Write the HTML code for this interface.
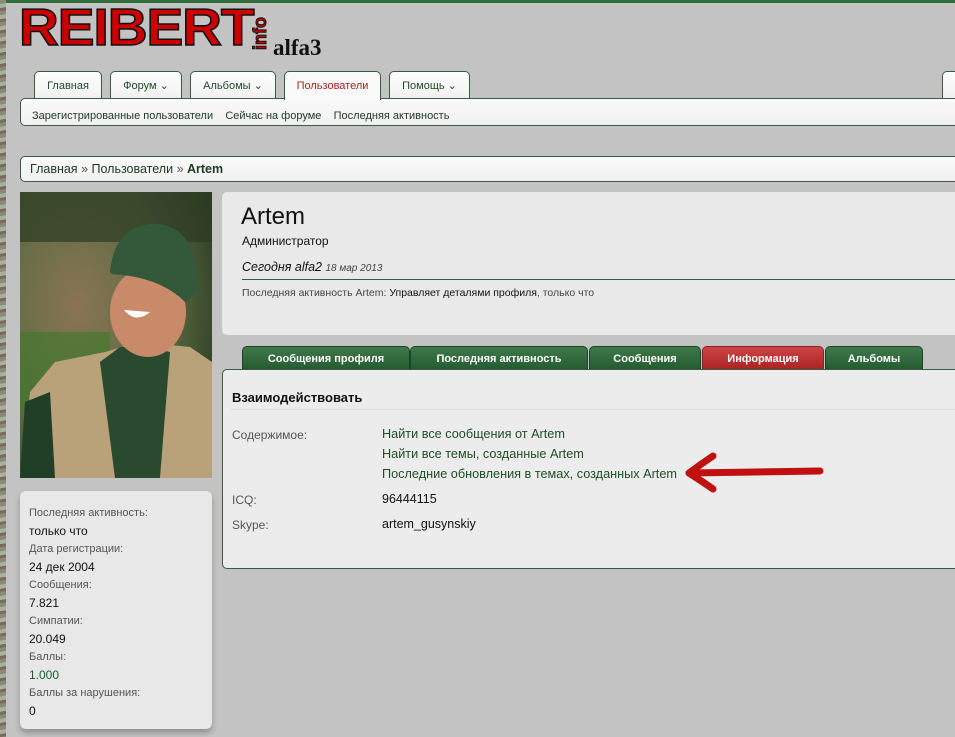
<!DOCTYPE html>
<html><head><meta charset="utf-8"><style>
*{margin:0;padding:0;box-sizing:border-box}
body{width:955px;height:737px;overflow:hidden;background:#c3c3c3;font-family:"Liberation Sans",sans-serif;position:relative;color:#222}
.a{position:absolute}
.tab{position:absolute;top:71px;height:28px;background:linear-gradient(#fff,#f0f0f0);border:1px solid #3a5a48;border-bottom:none;border-radius:5px 5px 0 0;font-size:11px;color:#1e4a2a;text-align:center;line-height:28px}
.sub{font-size:11px;color:#1e3a22}
.bar{position:absolute;left:20px;right:-5px;background:linear-gradient(#fafafa,#f0f0f0);border:1px solid #3a5a48;border-radius:5px}
.pt{position:absolute;top:346px;height:24px;background:linear-gradient(#3f7a4a,#245a30);border:1px solid #1d4226;border-bottom:none;border-radius:5px 5px 0 0;color:#fff;font-weight:bold;font-size:11px;text-align:center;line-height:24px}
.lab{font-size:11px;color:#555}
.val{font-size:12px;color:#111}
.lk{font-size:12.7px;color:#1e4f25}
</style></head><body>
<div class="a" style="left:0;top:0;width:955px;height:3px;background:#2f6d3a"></div>
<div class="a" style="left:0;top:0;width:6px;height:737px;background:repeating-linear-gradient(170deg,#8a8a78 0 4px,#a8b0a0 4px 8px,#7a6a5a 8px 11px)"></div>
<div class="a" style="left:19px;top:0;font-weight:bold;font-size:52px;color:#c00;line-height:56px;-webkit-text-stroke:1.5px #111;transform:scaleX(1.06);transform-origin:left;letter-spacing:-1px">REIBERT</div>
<div class="a" style="left:251px;top:50px;font-weight:bold;font-size:18px;color:#c00;-webkit-text-stroke:1px #111;transform:rotate(-90deg);transform-origin:left top;line-height:18px">info</div>
<div class="a" style="left:273px;top:35px;font-family:'Liberation Serif',serif;font-weight:bold;font-size:23px;color:#111">alfa3</div>

<div class="tab" style="left:34px;width:68px">Главная</div>
<div class="tab" style="left:110px;width:72px">Форум ⌄</div>
<div class="tab" style="left:190px;width:86px">Альбомы ⌄</div>
<div class="tab" style="left:284px;width:97px;color:#b02020;height:29px;background:#fafafa;z-index:2">Пользователи</div>
<div class="tab" style="left:389px;width:81px">Помощь ⌄</div>
<div class="tab" style="left:942px;width:20px"></div>
<div class="bar" style="top:98px;height:28px;padding:7px 11px"><span class="sub">Зарегистрированные пользователи &nbsp;&nbsp; Сейчас на форуме &nbsp;&nbsp; Последняя активность</span></div>
<div class="bar" style="top:156px;height:26px;padding:5px 9px;font-size:12.5px;color:#1e3a22">Главная <span style="color:#555">»</span> Пользователи <span style="color:#555">»</span> <b>Artem</b></div>

<svg class="a" style="left:20px;top:192px" width="192" height="286" viewBox="0 0 192 286">
<defs><radialGradient id="bg" cx=".3" cy=".4" r=".8"><stop offset="0" stop-color="#8a7456"/><stop offset=".6" stop-color="#5a6a40"/><stop offset="1" stop-color="#2a3a22"/></radialGradient></defs>
<rect width="192" height="286" fill="url(#bg)"/>
<rect width="192" height="50" fill="#2c3a24" opacity=".7"/>
<rect y="140" width="90" height="80" fill="#3d7a2a" opacity=".6"/>
<path d="M0 286 L10 200 L35 170 L85 160 L120 150 L170 155 L192 170 L192 286Z" fill="#b9a27a"/>
<path d="M80 170 L100 155 L130 155 L150 160 L140 286 L95 286Z" fill="#2a4a30"/>
<path d="M0 286 L5 210 L30 200 L35 286Z" fill="#213f27"/>
<ellipse cx="128" cy="120" rx="38" ry="45" fill="#c98a6a"/>
<path d="M90 80 Q95 30 140 32 Q180 40 178 100 L165 110 Q140 85 92 82Z" fill="#34583a"/>
<path d="M104 118 Q116 132 130 120 Z" fill="#fff"/>
</svg>

<div class="a" style="left:20px;top:491px;width:192px;height:238px;background:#e8e8e8;border-radius:6px;box-shadow:0 4px 6px rgba(0,0,0,.25);padding:13px 9px;line-height:18px">
<div class="lab">Последняя активность:</div><div class="val">только что</div>
<div class="lab">Дата регистрации:</div><div class="val">24 дек 2004</div>
<div class="lab">Сообщения:</div><div class="val">7.821</div>
<div class="lab">Симпатии:</div><div class="val">20.049</div>
<div class="lab">Баллы:</div><div class="val" style="color:#1e5a2a">1.000</div>
<div class="lab">Баллы за нарушения:</div><div class="val">0</div>
</div>

<div class="a" style="left:222px;top:192px;width:740px;height:143px;background:#e9e9e9;border-radius:5px"></div>
<div class="a" style="left:241px;top:203px;font-family:'Liberation Sans Narrow','Liberation Sans',sans-serif;font-size:24px;color:#111">Artem</div>
<div class="a" style="left:242px;top:234px;font-size:12px;color:#111;font-family:'Liberation Sans Narrow','Liberation Sans',sans-serif">Администратор</div>
<div class="a" style="left:242px;top:260px;font-size:12.5px;font-style:italic;color:#111;font-family:'Liberation Sans Narrow','Liberation Sans',sans-serif">Сегодня alfa2 <span style="font-size:10px;color:#444">18 мар 2013</span></div>
<div class="a" style="left:242px;top:279px;width:720px;height:1px;background:#3a5a48"></div>
<div class="a" style="left:242px;top:287px;font-size:10.5px;color:#444;font-family:'Liberation Sans Narrow','Liberation Sans',sans-serif">Последняя активность Artem: <span style="color:#111">Управляет деталями профиля</span>, только что</div>

<div class="pt" style="left:242px;width:168px">Сообщения профиля</div>
<div class="pt" style="left:410px;width:178px">Последняя активность</div>
<div class="pt" style="left:589px;width:112px">Сообщения</div>
<div class="pt" style="left:702px;width:122px;background:linear-gradient(#c44,#a22);border-color:#822">Информация</div>
<div class="pt" style="left:825px;width:98px">Альбомы</div>

<div class="a" style="left:222px;top:369px;width:740px;height:200px;background:#ececec;border:1px solid #3a5a48;border-radius:5px"></div>
<div class="a" style="left:232px;top:390px;font-weight:bold;font-size:13px;color:#111">Взаимодействовать</div>
<div class="a" style="left:230px;top:409px;width:725px;height:1px;background:#ddd"></div>
<div class="a lab" style="left:232px;top:428px;font-size:12px">Содержимое:</div>
<div class="a lk" style="left:382px;top:427px">Найти все сообщения от Artem</div>
<div class="a lk" style="left:382px;top:447px">Найти все темы, созданные Artem</div>
<div class="a lk" style="left:382px;top:467px">Последние обновления в темах, созданных Artem</div>
<div class="a lab" style="left:232px;top:493px;font-size:12px">ICQ:</div>
<div class="a val" style="left:382px;top:492px;font-size:12.5px">96444115</div>
<div class="a lab" style="left:232px;top:518px;font-size:12px">Skype:</div>
<div class="a val" style="left:382px;top:517px;font-size:12.5px">artem_gusynskiy</div>
<svg class="a" style="left:680px;top:450px" width="150" height="50"><path d="M9 23 L140 21 M9 23 Q21 14 33 6 M9 23 Q23 32 33 39" stroke="#c01010" stroke-width="7" stroke-linecap="round" fill="none"/></svg>
</body></html>
